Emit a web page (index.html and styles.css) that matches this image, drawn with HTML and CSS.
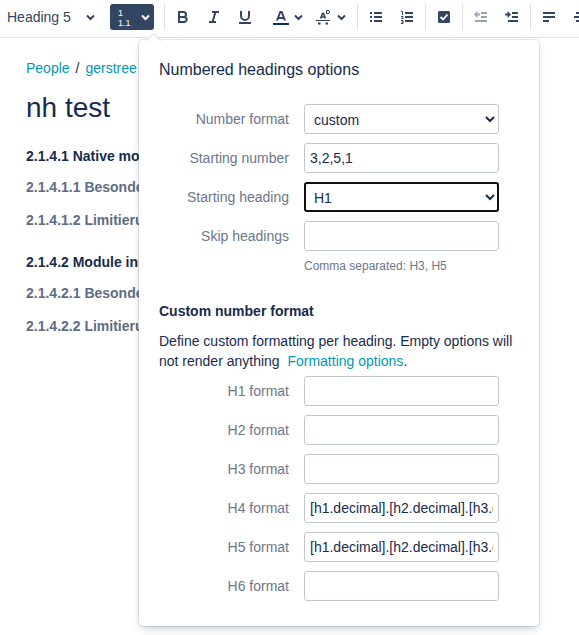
FILE: index.html
```html
<!DOCTYPE html>
<html lang="en">
<head>
  <meta charset="UTF-8">
  <meta name="viewport" content="width=device-width, initial-scale=1.0">
  <title>nh test - Edit</title>
  <link rel="stylesheet" href="styles.css">
</head>
<body>

  <!-- Shared icons -->
  <svg class="sprite" aria-hidden="true">
    <symbol id="chevron" viewBox="0 0 9 16">
      <path d="M1 6.500l3.500 3.500L8 6.500" fill="none" stroke="currentColor" stroke-width="2"/>
    </symbol>
  </svg>

  <!-- Editor toolbar -->
  <div class="toolbar" role="toolbar">
    <button class="style-button">Heading 5 <svg class="chevron"><use href="#chevron"/></svg></button>

    <div class="numbering">
      <button class="numbering-button" aria-label="Numbered headings">
        <span class="numbering-label">1<br>1.1</span>
        <svg class="chevron"><use href="#chevron"/></svg>
      </button>

      <!-- Options popup -->
      <form class="popup">
        <h2 class="popup-title">Numbered headings options</h2>

        <div class="fields">
          <label for="numberFormat">Number format</label>
          <select id="numberFormat"><option>custom</option><option>decimal</option></select>

          <label for="startNumber">Starting number</label>
          <input type="text" id="startNumber" value="3,2,5,1">

          <label for="startHeading">Starting heading</label>
          <select id="startHeading" class="active"><option>H1</option><option>H2</option><option>H3</option></select>

          <label for="skipHeadings">Skip headings</label>
          <input type="text" id="skipHeadings">
        </div>
        <p class="hint">Comma separated: H3, H5</p>

        <h3 class="section-title">Custom number format</h3>
        <p class="description">Define custom formatting per heading. Empty options will not render anything &nbsp;<a href="#">Formatting options</a>.</p>

        <div class="fields">
          <label for="h1Format">H1 format</label>
          <input type="text" id="h1Format">

          <label for="h2Format">H2 format</label>
          <input type="text" id="h2Format">

          <label for="h3Format">H3 format</label>
          <input type="text" id="h3Format">

          <label for="h4Format">H4 format</label>
          <input type="text" id="h4Format" value="[h1.decimal].[h2.decimal].[h3.decimal].[h4.decimal]">

          <label for="h5Format">H5 format</label>
          <input type="text" id="h5Format" value="[h1.decimal].[h2.decimal].[h3.decimal].[h4.decimal].[h5.decimal]">

          <label for="h6Format">H6 format</label>
          <input type="text" id="h6Format">
        </div>
      </form>
    </div>

    <span class="separator"></span>
    <button class="icon-button" aria-label="Bold">
      <svg class="icon" viewBox="0 0 16 16"><path d="M4 3h4.500a2.400 2.400 0 0 1 0 5H4zM4 8h5.200a2.500 2.500 0 0 1 0 5H4z" fill="none" stroke="currentColor" stroke-width="2"/></svg>
    </button>
    <button class="icon-button" aria-label="Italic">
      <svg class="icon" viewBox="0 0 16 16"><path d="M6 3h7M3 13h7M9.500 3l-3 10" fill="none" stroke="currentColor" stroke-width="2"/></svg>
    </button>
    <button class="icon-button" aria-label="Underline">
      <svg class="icon" viewBox="0 0 16 16"><path d="M4 2v5a4 4 0 0 0 8 0V2M2 14h12" fill="none" stroke="currentColor" stroke-width="2"/></svg>
    </button>
    <div class="format-group">
      <button class="menu-button" aria-label="Text color">
        <svg class="icon" viewBox="0 0 16 16"><path d="M4 11.500L7.300 3h1.400L12 11.500M5.200 9h5.600" fill="none" stroke="currentColor" stroke-width="2"/><path d="M0 14h16v2H0z" fill="#003366"/></svg>
        <svg class="chevron"><use href="#chevron"/></svg>
      </button>
      <button class="menu-button" aria-label="More formatting">
        <svg class="icon" viewBox="0 0 16 16"><path d="M4.500 9.500l2-5h1l2 5M5 8h4" fill="none" stroke="currentColor" stroke-width="1.600"/><path d="M0 11.500h14" stroke="currentColor"/><path d="M2 14.500h2.500M9.500 14.500H12" stroke="currentColor" stroke-width="2"/><path d="M10.500 1.500H12a1.500 1.500 0 0 1 0 3h-1.500z" fill="none" stroke="currentColor"/></svg>
        <svg class="chevron"><use href="#chevron"/></svg>
      </button>
    </div>

    <span class="separator"></span>
    <button class="icon-button" aria-label="Bullet list">
      <svg class="icon" viewBox="0 0 16 16"><path d="M2 4h2M2 8h2M2 12h2M6 4h8M6 8h8M6 12h8" stroke="currentColor" stroke-width="2"/></svg>
    </button>
    <button class="icon-button" aria-label="Numbered list">
      <svg class="icon" viewBox="0 0 16 16"><path d="M6 4h8M6 8h8M6 12h8" stroke="currentColor" stroke-width="2"/><path d="M2 2.500h1.500V6M2 7.500h2v1L2.500 9.500H4.500M2 11.500h2v3H2M2.500 13H4" fill="none" stroke="currentColor"/></svg>
    </button>

    <span class="separator"></span>
    <button class="icon-button" aria-label="Task list">
      <svg class="icon" viewBox="0 0 16 16"><rect x="2" y="2" width="12" height="12" rx="1.500" fill="currentColor"/><path d="M4.500 8l2.500 2.500L11.500 5.500" fill="none" stroke="#fff" stroke-width="1.800"/></svg>
    </button>

    <span class="separator"></span>
    <button class="icon-button" aria-label="Outdent" disabled>
      <svg class="icon" viewBox="0 0 16 16"><path d="M8 4h6M8 8h6M2 12h12M3 5.500h4" stroke="currentColor" stroke-width="2"/><path d="M4.500 2v7L1 5.500z" fill="currentColor"/></svg>
    </button>
    <button class="icon-button" aria-label="Indent">
      <svg class="icon" viewBox="0 0 16 16"><path d="M8 4h6M8 8h6M4 12h10M1 5.500h4" stroke="currentColor" stroke-width="2"/><path d="M3.500 2v7L7 5.500z" fill="currentColor"/></svg>
    </button>

    <span class="separator"></span>
    <button class="icon-button" aria-label="Align left">
      <svg class="icon" viewBox="0 0 16 16"><path d="M2 4h12M2 8h12M2 12h6" stroke="currentColor" stroke-width="2"/></svg>
    </button>
    <button class="icon-button" aria-label="Align center">
      <svg class="icon" viewBox="0 0 16 16"><path d="M4 4h8M2 8h12M4 12h8" stroke="currentColor" stroke-width="2"/></svg>
    </button>
  </div>

  <!-- Page content -->
  <main class="page">
    <nav class="breadcrumbs"><a href="#">People</a><span>/</span><a href="#">gerstree</a></nav>
    <h1>nh test</h1>

    <h5>2.1.4.1 Native module</h5>
    <h6>2.1.4.1.1 Besonderheiten</h6>
    <h6>2.1.4.1.2 Limitierungen</h6>

    <h5>2.1.4.2 Module innerhalb</h5>
    <h6>2.1.4.2.1 Besonderheiten</h6>
    <h6>2.1.4.2.2 Limitierungen</h6>
  </main>

</body>
</html>
```

FILE: styles.css
```css
* {
  margin: 0;
  padding: 0;
  box-sizing: border-box;
}

body {
  min-height: 100vh;
  font-family: "Liberation Sans", Arial, sans-serif;
  font-size: 14px;
  line-height: 20px;
  color: #172b4d;
  background-color: #fff;
  overflow-x: hidden;
}

a {
  color: #0098b7;
  text-decoration: none;
}

button {
  border: none;
  border-radius: 3px;
  background: none;
  color: #344563;
  font: inherit;
  cursor: pointer;
}

button:disabled {
  color: #9aa3b1;
}

.sprite {
  position: absolute;
  width: 0;
  height: 0;
}

/* Toolbar */
.toolbar {
  display: flex;
  padding: 4px 0 7px;
  border-bottom: 1px solid #dfe1e6;
}

.toolbar > * {
  flex-shrink: 0;
}

.toolbar button {
  display: flex;
  align-items: center;
  height: 26px;
}

.icon {
  width: 16px;
  height: 16px;
}

.chevron {
  width: 9px;
  height: 16px;
}

.style-button {
  justify-content: space-between;
  width: 102px;
  padding: 0 7px;
}

.numbering {
  position: relative;
  margin: 0 8px;
}

.numbering-button {
  justify-content: space-between;
  width: 44px;
  padding: 0 4px 0 8px;
  background-color: #344563;
  color: #fff;
}

.numbering-label {
  padding-top: 2px;
  font-size: 9px;
  line-height: 10px;
  text-align: left;
}

.separator {
  width: 1px;
  height: 26px;
  margin: 0 3px 0 2px;
  background-color: #dfe1e6;
}

.icon-button {
  width: 31px;
  padding-left: 7px;
}

.format-group {
  display: flex;
  margin: 0 4px;
}

.menu-button {
  gap: 5px;
  padding: 0 5px 0 8px;
}

/* Popup under the numbering button */
.popup {
  position: absolute;
  top: 36px;
  left: 29px;
  z-index: 10;
  width: 400px;
  padding: 20px 20px 25px;
  border-radius: 4px;
  background-color: #fff;
  box-shadow: 0 4px 8px -2px rgba(9, 30, 66, 0.25), 0 0 1px 1px rgba(9, 30, 66, 0.1);
}

/* Arrow */
.popup::before {
  content: "";
  position: absolute;
  top: -5px;
  left: 9px;
  width: 10px;
  height: 10px;
  border: 1px solid #dfe1e6;
  border-right: none;
  border-bottom: none;
  background-color: #fff;
  transform: rotate(45deg);
}

.popup-title {
  margin-bottom: 24px;
  font-size: 16px;
  font-weight: normal;
}

.fields {
  display: grid;
  grid-template-columns: 130px 195px;
  column-gap: 15px;
  row-gap: 9px;
}

.fields label {
  line-height: 30px;
  text-align: right;
  color: #6b778c;
}

.fields input,
.fields select {
  width: 100%;
  height: 30px;
  border: 1px solid #c1c7d0;
  border-radius: 3px;
  outline: none;
  background-color: #fff;
  font: inherit;
  color: #172b4d;
}

.fields input {
  padding: 0 5px;
}

.fields select {
  padding: 1px 0 0 5px;
}

.fields select.active {
  outline: 2px solid #101010;
  outline-offset: -2px;
}

.hint {
  margin: 5px 0 25px 145px;
  font-size: 12px;
  color: #6b778c;
}

.section-title {
  margin-bottom: 10px;
  font-size: 14px;
}

.description {
  margin-bottom: 5px;
}

/* Page content */
.page {
  padding: 20px 26px;
}

.breadcrumbs {
  display: flex;
  gap: 6px;
}

.page h1 {
  margin: 14px 0 22px;
  font-size: 28px;
  font-weight: normal;
  line-height: 32px;
}

.page h5,
.page h6 {
  font-size: 14px;
}

.page h5 {
  margin-bottom: 11px;
}

.page h6 {
  margin-bottom: 13px;
  color: #5e6c84;
}

.page h6 + h5 {
  margin-top: 22px;
}
```
